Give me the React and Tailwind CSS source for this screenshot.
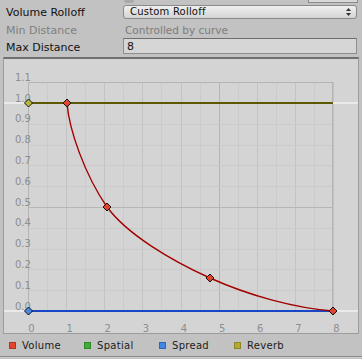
const X = (d) => 28 + d * 38.125;
const Y = (v) => 311 - v * 208;

function Diamond({ x, y, fill }) {
  return (
    <path
      d={`M${x} ${y - 4} L${x + 4} ${y} L${x} ${y + 4} L${x - 4} ${y} Z`}
      fill={fill}
      stroke="#111"
      strokeWidth="1"
    />
  );
}

function Graph() {
  const vlines = [];
  for (let i = 0; i <= 16; i++) {
    const x = Math.round(X(i / 2)) + 0.5;
    let c = "#cbcbcb";
    if (i % 2 === 0) c = "#c3c3c3";
    if (i % 10 === 0) c = "#b4b4b4";
    vlines.push(<line key={"v" + i} x1={x} x2={x} y1={82} y2={311} stroke={c} />);
  }
  const hlines = [];
  for (let i = 0; i <= 11; i++) {
    const y = Math.round(Y(i / 10)) + 0.5;
    let c = "#cbcbcb";
    if (i % 5 === 0) c = "#b6b6b6";
    if (i === 11) c = "#b4b4b4";
    hlines.push(<line key={"h" + i} x1={28} x2={333} y1={y} y2={y} stroke={c} />);
  }
  const ylabels = [];
  for (let i = 0; i <= 11; i++) {
    ylabels.push(
      <text key={"yl" + i} x={15} y={Y(i / 10) - 1.5} fontSize="10" fill="#8e8e8e" fontFamily="'DejaVu Sans', sans-serif">
        {(i / 10).toFixed(1)}
      </text>
    );
  }
  const xlabels = [];
  for (let i = 0; i <= 8; i++) {
    xlabels.push(
      <text key={"xl" + i} x={X(i) + 3.5} y={332} fontSize="10" fill="#8e8e8e" textAnchor="middle" fontFamily="'DejaVu Sans', sans-serif">
        {i}
      </text>
    );
  }
  return (
    <svg width="354" height="274" className="block">
      <g transform="translate(-4,-59)">
        <rect x="4" y="59" width="354" height="274" fill="#d4d4d4" />
        {vlines}
        {hlines}
        <rect x="28.5" y="82.5" width="304" height="228" fill="none" stroke="#b4b4b4" />
        {ylabels}
        {xlabels}
        {/* outside extension lines */}
        <line x1="4" x2="28" y1="103" y2="103" stroke="#f2f2f2" strokeWidth="1.5" />
        <line x1="333" x2="358" y1="103" y2="103" stroke="#f2f2f2" strokeWidth="1.5" />
        <line x1="4" x2="28" y1="311" y2="311" stroke="#f2f2f2" strokeWidth="1.5" />
        <line x1="333" x2="358" y1="311" y2="311" stroke="#f2f2f2" strokeWidth="1.5" />
        {/* reverb */}
        <line x1="28" x2="333" y1="103" y2="103" stroke="#5e5800" strokeWidth="2" />
        {/* spread */}
        <line x1="28" x2="333" y1="311" y2="311" stroke="#1747c8" strokeWidth="2" />
        {/* volume */}
        <path
          d="M67 103 C69 130 85 175 107 207 C127 234 170 260 210 278 C250 296 295 308 333 311"
          fill="none"
          stroke="#a30000"
          strokeWidth="1.4"
        />
        <Diamond x={28.5} y={103} fill="#b9b83c" />
        <Diamond x={28.5} y={311} fill="#4a88e6" />
        <Diamond x={67} y={103} fill="#e2442a" />
        <Diamond x={107} y={207} fill="#e2442a" />
        <Diamond x={210} y={278} fill="#e2442a" />
        <Diamond x={333} y={311} fill="#e2442a" />
      </g>
    </svg>
  );
}

function Legend({ color, border, label }) {
  return (
    <div className="flex w-[75px] items-center">
      <div className={`h-[7px] w-[7px] border ${color} ${border}`} />
      <span className="ml-[6px] text-[10px] tracking-[0.3px] text-[#1c1c1c]">{label}</span>
    </div>
  );
}

export default function App() {
  return (
    <div
      className="h-[359px] w-[362px] overflow-hidden bg-[#c2c2c2] text-[11px] text-[#111]"
      style={{ fontFamily: "'DejaVu Sans', 'Liberation Sans', sans-serif" }}
    >
      {/* cut-off row at the top */}
      <div className="flex h-[3px] items-end overflow-hidden">
        <div className="ml-[124px] h-[6px] w-[10px] shrink-0 rounded-b-[3px] bg-[#a9a9a9]" />
        <div className="ml-[174px] h-[14px] w-[50px] shrink-0 border border-[#8c8c8c] bg-[#d8d8d8]" />
      </div>
      {/* Volume Rolloff */}
      <div className="flex h-[18px] items-center">
        <div className="w-[123px] pl-[6px] leading-none">Volume Rolloff</div>
        <div className="flex h-[14px] w-[234px] items-center rounded-[3px] border border-[#8a8a8a] bg-gradient-to-b from-[#f0f0f0] to-[#d4d4d4] pl-[6px] pr-[5px] text-[10px] leading-none tracking-[0.2px] text-[#111]">
          <span>Custom Rolloff</span>
          <svg width="5" height="8" className="ml-auto" viewBox="0 0 5 8">
            <path d="M2.5 0 L5 3 L0 3 Z" fill="#333" />
            <path d="M2.5 8 L5 5 L0 5 Z" fill="#333" />
          </svg>
        </div>
      </div>
      {/* Min Distance */}
      <div className="flex h-[17px] items-center pt-[2px]">
        <div className="w-[125px] pl-[6px] leading-none text-[#808080]">Min Distance</div>
        <div className="text-[10.5px] leading-none text-[#7d7d7d]">Controlled by curve</div>
      </div>
      {/* Max Distance */}
      <div className="flex h-[16px] items-center">
        <div className="w-[123px] pl-[6px] pt-[2px] leading-none">Max Distance</div>
        <div className="flex h-[16px] w-[234px] items-center border border-[#8e8e8e] border-t-[#6e6e6e] bg-[#d6d6d6] pl-[3px] leading-none">
          8
        </div>
      </div>
      {/* Graph panel */}
      <div className="ml-[3px] mt-[3px] h-[277px] w-[356px] border-x border-b border-t-2 border-[#9c9c9c] border-t-[#707070]">
        <Graph />
      </div>
      {/* Legend */}
      <div className="flex h-[22px] items-center pl-[9px] pt-[1px]">
        <Legend color="bg-[#e2452c]" border="border-[#b03620]" label="Volume" />
        <Legend color="bg-[#3fae38]" border="border-[#2e8a2a]" label="Spatial" />
        <Legend color="bg-[#4286e4]" border="border-[#2f67b8]" label="Spread" />
        <Legend color="bg-[#b0aa34]" border="border-[#8c8724]" label="Reverb" />
      </div>
      <div className="h-px bg-[#8a8a8a]" />
      <div className="h-px bg-[#d0d0d0]" />
    </div>
  );
}
